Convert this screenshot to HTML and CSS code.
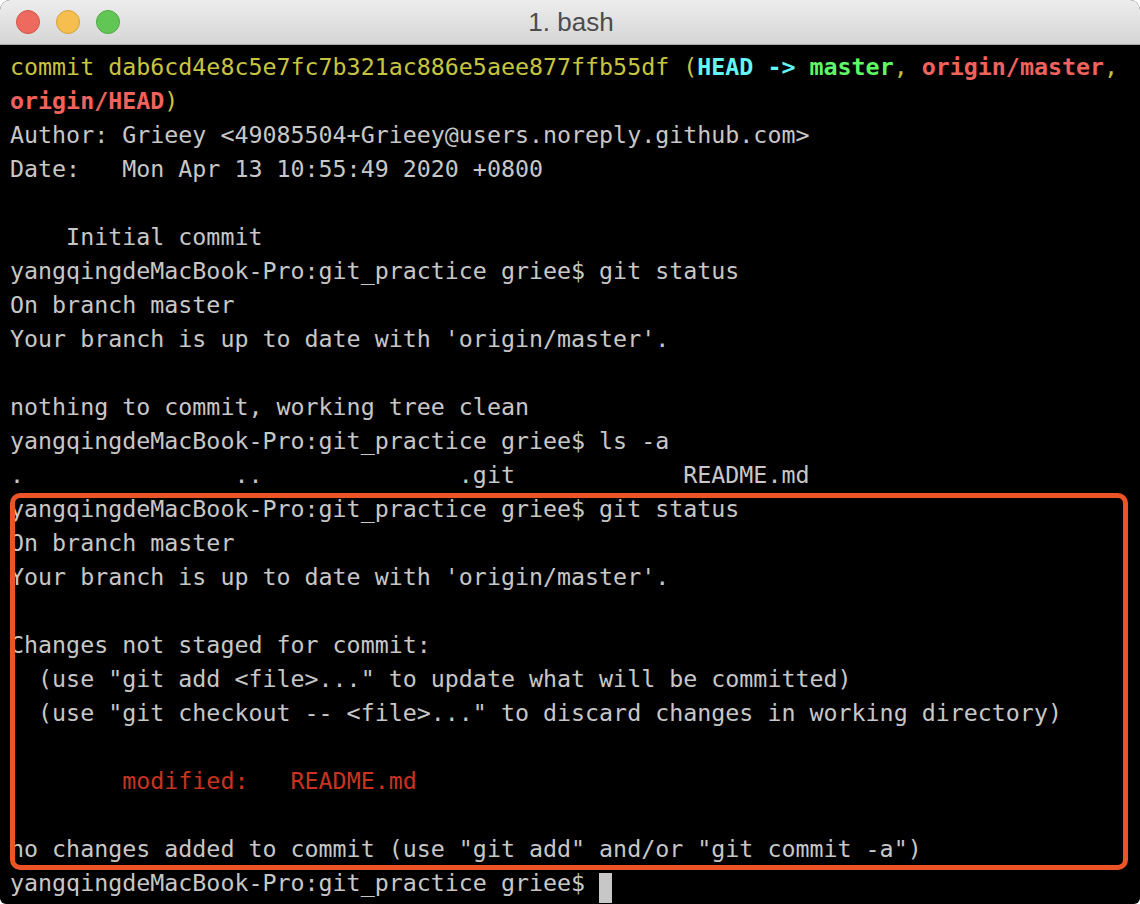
FILE: index.html
```html
<!DOCTYPE html>
<html lang="en">
<head>
    <meta charset="UTF-8">
    <title>1. bash</title>
    <link rel="stylesheet" href="styles.css">
</head>
<body>
    <div class="window">
        <div class="titlebar">
            <div class="lights">
                <span class="light red"></span>
                <span class="light yellow"></span>
                <span class="light green"></span>
            </div>
            <div class="title">1. bash</div>
        </div>
        <div class="terminal">
<pre class="output"><span class="yellow-text">commit dab6cd4e8c5e7fc7b321ac886e5aee877ffb55df (</span><b class="cyan-text">HEAD -&gt; </b><b class="green-text">master</b><span class="yellow-text">, </span><b class="red-text">origin/master</b><span class="yellow-text">,</span>
<b class="red-text">origin/HEAD</b><span class="yellow-text">)</span>
Author: Grieey &lt;49085504+Grieey@users.noreply.github.com&gt;
Date:   Mon Apr 13 10:55:49 2020 +0800

    Initial commit
yangqingdeMacBook-Pro:git_practice griee$ git status
On branch master
Your branch is up to date with 'origin/master'.

nothing to commit, working tree clean
yangqingdeMacBook-Pro:git_practice griee$ ls -a
.               ..              .git            README.md
yangqingdeMacBook-Pro:git_practice griee$ git status
On branch master
Your branch is up to date with 'origin/master'.

Changes not staged for commit:
  (use "git add &lt;file&gt;..." to update what will be committed)
  (use "git checkout -- &lt;file&gt;..." to discard changes in working directory)

        <span class="modified">modified:   README.md</span>

no changes added to commit (use "git add" and/or "git commit -a")
yangqingdeMacBook-Pro:git_practice griee$ <span class="cursor"> </span></pre>
            <div class="highlight"></div>
        </div>
    </div>
</body>
</html>
```

FILE: styles.css
```css
body {
    margin: 0;
    background-color: #ffffff;
    overflow: hidden;
}

.window {
    width: 1140px;
    height: 904px;
    border-radius: 10px 10px 6px 6px;
    overflow: hidden;
    display: flex;
    flex-direction: column;
    background-color: #000;
}

.titlebar {
    height: 44px;
    position: relative;
    background: linear-gradient(#ededed, #d5d5d5);
    border-bottom: 1px solid #a9a9a9;
    display: flex;
    align-items: center;
    justify-content: center;
}

.lights {
    position: absolute;
    left: 16px;
    top: 10px;
    display: flex;
    gap: 16px;
}

.light {
    width: 24px;
    height: 24px;
    border-radius: 50%;
    box-sizing: border-box;
}

.light.red {
    background-color: #ee6a5f;
    border: 1px solid #d25448;
}

.light.yellow {
    background-color: #f6be4f;
    border: 1px solid #d6a03c;
}

.light.green {
    background-color: #62c655;
    border: 1px solid #4ea843;
}

.title {
    font-family: "Liberation Sans", Arial, sans-serif;
    font-size: 26px;
    color: #4c4c4c;
    margin-left: 2px;
}

.terminal {
    flex: 1;
    position: relative;
    padding: 5px 0 0 10px;
}

.output {
    margin: 0;
    font-family: "DejaVu Sans Mono", monospace;
    font-size: 23.3px;
    line-height: 34px;
    color: #c7c7c7;
    tab-size: 8;
}

.output b {
    font-weight: bold;
}

.yellow-text {
    color: #c7c43f;
}

.cyan-text {
    color: #62f6f8;
}

.green-text {
    color: #5ff967;
}

.red-text {
    color: #f0625c;
}

.modified {
    color: #c9331f;
}

.cursor {
    display: inline-block;
    width: 13px;
    height: 30px;
    vertical-align: -7px;
    background-color: #c7c7c7;
}

.highlight {
    position: absolute;
    left: 10px;
    top: 448px;
    width: 1118px;
    height: 377px;
    box-sizing: border-box;
    border: 5px solid #ec5427;
    border-radius: 10px;
}
```
